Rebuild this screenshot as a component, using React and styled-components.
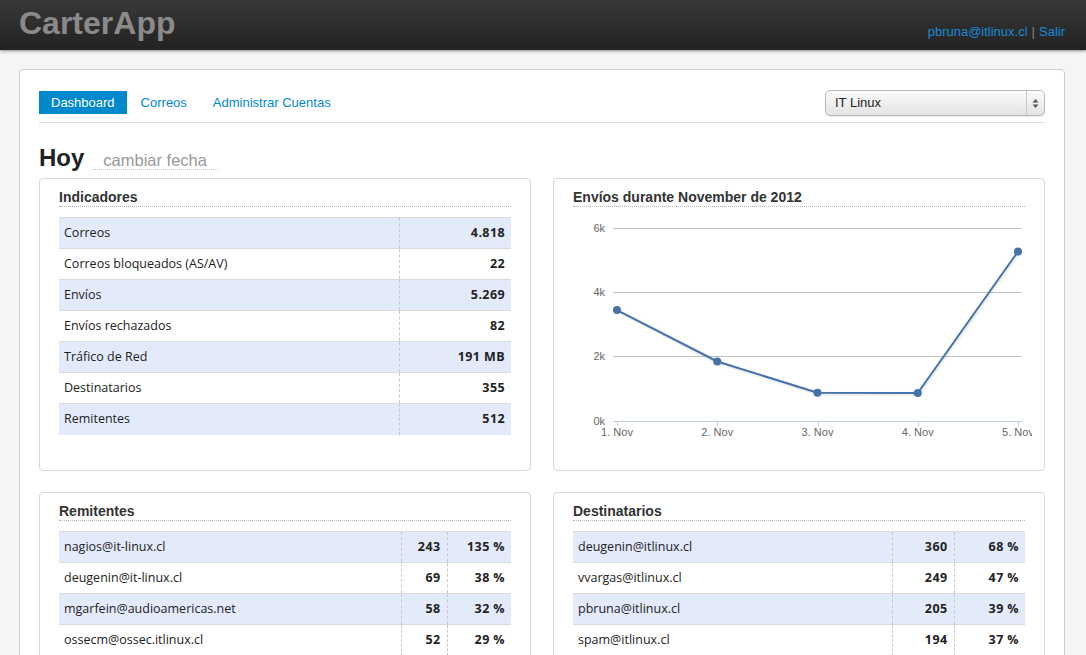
import React from "react";
import styled, { createGlobalStyle } from "styled-components";

const Global = createGlobalStyle`
  html, body { margin: 0; padding: 0; }
  body {
    background: #f5f5f6;
    font-family: "Liberation Sans", Arial, sans-serif;
    color: #333;
  }
`;

const Header = styled.header`
  height: 50px;
  background: linear-gradient(to bottom, #383838, #222222);
  box-shadow: 0 1px 3px rgba(0, 0, 0, 0.45);
  display: flex;
  justify-content: space-between;
  align-items: flex-start;
  padding: 0 21px 0 19px;
`;

const Logo = styled.div`
  font-size: 32px;
  font-weight: bold;
  line-height: 46px;
  color: #8a8a8a;
`;

const UserBox = styled.div`
  padding-top: 24px;
  font-size: 13px;
  line-height: 16px;
  color: #777;
`;

const HeaderLink = styled.a`
  color: #1a8bd6;
  text-decoration: none;
`;

const Sep = styled.span`
  margin: 0 4px;
  color: #888;
`;

const Main = styled.main`
  margin: 19px 21px 0 19px;
  background: #fff;
  border: 1px solid #cfcfcf;
  border-radius: 4px;
  padding: 20px 19px 30px 19px;
`;

const NavRow = styled.div`
  display: flex;
  justify-content: space-between;
  align-items: flex-start;
  padding-bottom: 6px;
  border-bottom: 1px solid #dcdcdc;
`;

const Tabs = styled.ul`
  display: flex;
  list-style: none;
  margin: 1px 0 0;
  padding: 0;
  gap: 2px;
`;

const Tab = styled.li`
  font-size: 13px;
  line-height: 15px;
  padding: 4px 12px;
  background: ${(p) => (p.$active ? "#0088cc" : "transparent")};
  color: ${(p) => (p.$active ? "#fff" : "#0088cc")};
`;

const Select = styled.div`
  box-sizing: border-box;
  width: 220px;
  height: 26px;
  border: 1px solid #b8b8b8;
  border-radius: 5px;
  background: linear-gradient(to bottom, #fbfbfb, #e4e4e4);
  box-shadow: inset 0 1px 0 #fff, 0 1px 1px rgba(0, 0, 0, 0.08);
  display: flex;
  align-items: stretch;
  font-size: 13px;
  color: #222;
`;

const SelectText = styled.span`
  flex: 1;
  padding-left: 9px;
  line-height: 24px;
`;

const SelectArrows = styled.span`
  width: 17px;
  border-left: 1px solid #c8c8c8;
  display: flex;
  align-items: center;
  justify-content: center;
`;

const HeadingRow = styled.div`
  display: flex;
  align-items: baseline;
  margin: 20px 0 5px;
`;

const Title = styled.h1`
  margin: 0;
  font-size: 24px;
  line-height: 30px;
  font-weight: bold;
  color: #222;
`;

const DateLink = styled.span`
  margin-left: 8px;
  padding: 0 11px;
  font-size: 16.5px;
  line-height: 17px;
  color: #999;
  border-bottom: 1px dotted #c4c4c4;
`;

const Grid = styled.div`
  display: grid;
  grid-template-columns: 1fr 1fr;
  column-gap: 22px;
  row-gap: 21px;
`;

const Panel = styled.section`
  box-sizing: border-box;
  min-height: ${(p) => p.$minH || 0}px;
  border: 1px solid #d8d8d8;
  border-radius: 4px;
  padding: 9px 19px 20px 19px;
`;

const PanelTitle = styled.h2`
  margin: 0 0 10px;
  font-size: 14px;
  line-height: 18px;
  font-weight: bold;
  color: #333;
  border-bottom: 1px dotted #b5b5b5;
`;

const Table = styled.table`
  width: 100%;
  border-collapse: collapse;
  font-family: "Open Sans", "DejaVu Sans", sans-serif;
  font-size: 12.5px;
  color: #222;
`;

const Row = styled.tr`
  background: ${(p) => (p.$alt ? "#e3ebfb" : "#fff")};
`;

const Cell = styled.td`
  border-top: 1px solid #dadada;
  height: 31px;
  padding: 0 6px 2px 5px;
  box-sizing: border-box;
  width: ${(p) => (p.$w ? `${p.$w}px` : "auto")};
  text-align: ${(p) => (p.$num ? "right" : "left")};
  font-weight: ${(p) => (p.$num ? "bold" : "normal")};
  border-left: ${(p) => (p.$num ? "1px dashed #c8c8c8" : "none")};
  letter-spacing: ${(p) => (p.$num ? "0.4px" : "0")};
  white-space: nowrap;
`;

const ChartBox = styled.div`
  margin: -7px -10px 0 0;
  height: 232px;
`;

const indicadores = [
  ["Correos", "4.818"],
  ["Correos bloqueados (AS/AV)", "22"],
  ["Envíos", "5.269"],
  ["Envíos rechazados", "82"],
  ["Tráfico de Red", "191 MB"],
  ["Destinatarios", "355"],
  ["Remitentes", "512"],
];

const remitentes = [
  ["nagios@it-linux.cl", "243", "135 %"],
  ["deugenin@it-linux.cl", "69", "38 %"],
  ["mgarfein@audioamericas.net", "58", "32 %"],
  ["ossecm@ossec.itlinux.cl", "52", "29 %"],
];

const destinatarios = [
  ["deugenin@itlinux.cl", "360", "68 %"],
  ["vvargas@itlinux.cl", "249", "47 %"],
  ["pbruna@itlinux.cl", "205", "39 %"],
  ["spam@itlinux.cl", "194", "37 %"],
];

const chartData = [3450, 1850, 880, 870, 5269];

function Chart() {
  const x0 = 44;
  const step = 100.25;
  const base = 211;
  const scale = 193 / 6000;
  const pts = chartData.map((v, i) => [x0 + i * step, base - v * scale]);
  const d = pts.map((p, i) => `${i ? "L" : "M"}${p[0]} ${p[1]}`).join(" ");
  const grid = [
    [18, "6k"],
    [82, "4k"],
    [146, "2k"],
  ];
  return (
    <svg width="459" height="232" viewBox="0 0 459 232">
      <defs>
        <filter id="sh" x="-10%" y="-10%" width="120%" height="130%">
          <feDropShadow dx="1" dy="1" stdDeviation="1" floodColor="#000" floodOpacity="0.15" />
        </filter>
      </defs>
      {grid.map(([y, l]) => (
        <g key={l}>
          <line x1="40" x2="449" y1={y + 0.5} y2={y + 0.5} stroke="#c0c0c0" strokeWidth="1" />
          <text x="32" y={y + 4} textAnchor="end" fontSize="11" fill="#666" fontFamily="Liberation Sans, sans-serif">
            {l}
          </text>
        </g>
      ))}
      <line x1="40" x2="449" y1={base + 0.5} y2={base + 0.5} stroke="#c0d0e0" strokeWidth="1" />
      <text x="32" y={base + 4} textAnchor="end" fontSize="11" fill="#666" fontFamily="Liberation Sans, sans-serif">
        0k
      </text>
      {pts.map(([x], i) => (
        <g key={i}>
          <line x1={Math.round(x) + 0.5} x2={Math.round(x) + 0.5} y1={base} y2={base + 5} stroke="#c0d0e0" />
          <text x={x} y={base + 15} textAnchor="middle" fontSize="11" fill="#666" fontFamily="Liberation Sans, sans-serif">
            {i + 1}. Nov
          </text>
        </g>
      ))}
      <path d={d} fill="none" stroke="#4572a7" strokeWidth="2" strokeLinejoin="round" filter="url(#sh)" />
      {pts.map(([x, y], i) => (
        <circle key={i} cx={x} cy={y} r="4" fill="#4572a7" />
      ))}
    </svg>
  );
}

export default function App() {
  return (
    <>
      <Global />
      <Header>
        <Logo>CarterApp</Logo>
        <UserBox>
          <HeaderLink href="#">pbruna@itlinux.cl</HeaderLink>
          <Sep>|</Sep>
          <HeaderLink href="#">Salir</HeaderLink>
        </UserBox>
      </Header>
      <Main>
        <NavRow>
          <Tabs>
            <Tab $active>Dashboard</Tab>
            <Tab>Correos</Tab>
            <Tab>Administrar Cuentas</Tab>
          </Tabs>
          <Select>
            <SelectText>IT Linux</SelectText>
            <SelectArrows>
              <svg width="7" height="11" viewBox="0 0 7 11">
                <path d="M3.5 1 L6.5 4.5 H0.5 Z" fill="#555" />
                <path d="M3.5 10 L6.5 6.5 H0.5 Z" fill="#555" />
              </svg>
            </SelectArrows>
          </Select>
        </NavRow>
        <HeadingRow>
          <Title>Hoy</Title>
          <DateLink>cambiar fecha</DateLink>
        </HeadingRow>
        <Grid>
          <Panel $minH={293}>
            <PanelTitle>Indicadores</PanelTitle>
            <Table>
              <tbody>
                {indicadores.map(([k, v], i) => (
                  <Row key={k} $alt={i % 2 === 0}>
                    <Cell>{k}</Cell>
                    <Cell $num $w={112}>
                      {v}
                    </Cell>
                  </Row>
                ))}
              </tbody>
            </Table>
          </Panel>
          <Panel $minH={293}>
            <PanelTitle>Envíos durante November de 2012</PanelTitle>
            <ChartBox>
              <Chart />
            </ChartBox>
          </Panel>
          <Panel>
            <PanelTitle>Remitentes</PanelTitle>
            <Table>
              <tbody>
                {remitentes.map(([k, a, b], i) => (
                  <Row key={k} $alt={i % 2 === 0}>
                    <Cell>{k}</Cell>
                    <Cell $num $w={46}>
                      {a}
                    </Cell>
                    <Cell $num $w={64}>
                      {b}
                    </Cell>
                  </Row>
                ))}
              </tbody>
            </Table>
          </Panel>
          <Panel>
            <PanelTitle>Destinatarios</PanelTitle>
            <Table>
              <tbody>
                {destinatarios.map(([k, a, b], i) => (
                  <Row key={k} $alt={i % 2 === 0}>
                    <Cell>{k}</Cell>
                    <Cell $num $w={62}>
                      {a}
                    </Cell>
                    <Cell $num $w={71}>
                      {b}
                    </Cell>
                  </Row>
                ))}
              </tbody>
            </Table>
          </Panel>
        </Grid>
      </Main>
    </>
  );
}
